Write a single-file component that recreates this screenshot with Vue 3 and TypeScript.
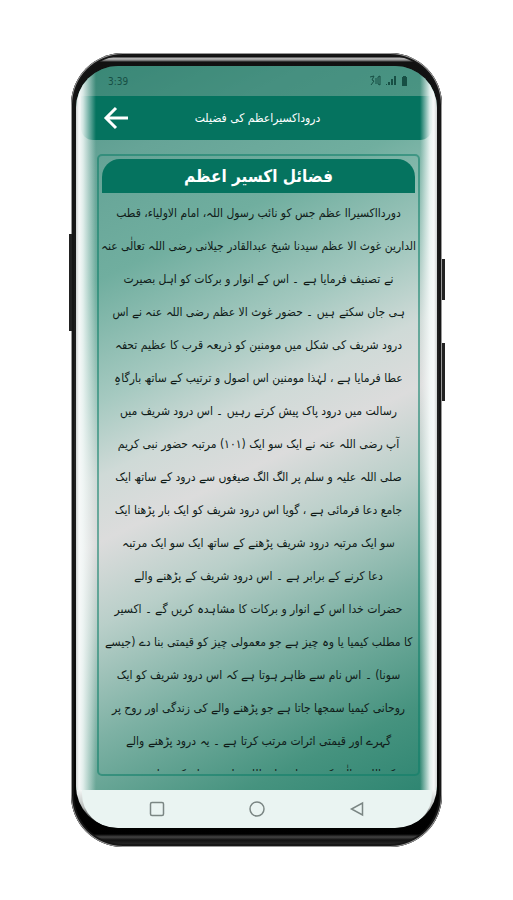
<script setup lang="ts">
const clock: string = '3:39'
const pageTitle: string = 'دروداکسیراعظم کی فضیلت'
const cardTitle: string = 'فضائل اکسیر اعظم'

const lines: string[] = [
  'دوردااکسیراا عظم جس کو نائب رسول اللہ، امام الاولیاء، قطب',
  'الدارین غوث الا عظم سیدنا شیخ عبدالقادر جیلانی رضی اللہ تعالٰی عنہ',
  'نے تصنیف فرمایا ہے ۔ اس کے انوار و برکات کو اہل بصیرت',
  'ہی جان سکتے ہیں ۔ حضور غوث الا عظم رضی اللہ عنہ نے اس',
  'درود شریف کی شکل میں مومنین کو ذریعہ قرب کا عظیم تحفہ',
  'عطا فرمایا ہے ، لہٰذا مومنین اس اصول و ترتیب کے ساتھ بارگاہِ',
  'رسالت میں درود پاک پیش کرتے رہیں ۔ اس درود شریف میں',
  'آپ رضی اللہ عنہ نے ایک سو ایک (۱۰۱) مرتبہ حضور نبی کریم',
  'صلی اللہ علیہ و سلم پر الگ الگ صیغوں سے درود کے ساتھ ایک',
  'جامع دعا فرمائی ہے ، گویا اس درود شریف کو ایک بار پڑھنا ایک',
  'سو ایک مرتبہ درود شریف پڑھنے کے ساتھ ایک سو ایک مرتبہ',
  'دعا کرنے کے برابر ہے ۔ اس درود شریف کے پڑھنے والے',
  'حضرات خدا اس کے انوار و برکات کا مشاہدہ کریں گے ۔ اکسیر',
  'کا مطلب کیمیا یا وہ چیز ہے جو معمولی چیز کو قیمتی بنا دے (جیسے',
  'سونا) ۔ اس نام سے ظاہر ہوتا ہے کہ اس درود شریف کو ایک',
  'روحانی کیمیا سمجھا جاتا ہے جو پڑھنے والے کی زندگی اور روح پر',
  'گہرے اور قیمتی اثرات مرتب کرتا ہے ۔ یہ درود پڑھنے والے',
  'کو اللہ تعالٰی کے رسول صلی اللہ علیہ و سلم کی زیارت سے',
]
</script>

<template>
  <main class="stage">
    <div class="phone">
      <span class="key key-left"></span>
      <span class="key key-power"></span>
      <span class="key key-volume"></span>
      <div class="screen">
        <div class="status">
          <span>{{ clock }}</span>
          <svg class="signals" viewBox="0 0 40 12" aria-hidden="true">
            <path d="M1 2l4-1-2 4 2 1-3 4M7 3v6M9 2l2-1v9l-2-1z" fill="none" stroke="currentColor" />
            <path d="M17 10V9h1v1zM19 10V7h2v3zM22 10V4h2v6zM25 10V1h2v9z" fill="currentColor" />
            <path d="M33 2h1V1h3v1h1v9h-5z" fill="currentColor" />
          </svg>
        </div>
        <header class="bar">
          <button class="back" type="button" aria-label="Back">
            <svg viewBox="0 0 26 24" aria-hidden="true">
              <path d="M13 2L3 12L13 22M3 12H25" fill="none" stroke="currentColor" stroke-width="3" />
            </svg>
          </button>
          <h1 dir="rtl" lang="ur">{{ pageTitle }}</h1>
        </header>
        <article class="card" dir="rtl" lang="ur">
          <h2>{{ cardTitle }}</h2>
          <div class="text">
            <p v-for="(line, i) in lines" :key="i">{{ line }}</p>
          </div>
        </article>
        <nav class="keys">
          <button type="button" aria-label="Recent apps">
            <svg viewBox="0 0 32 32" aria-hidden="true"><rect x="3" y="3" width="26" height="26" rx="3" /></svg>
          </button>
          <button type="button" aria-label="Home">
            <svg viewBox="0 0 32 32" aria-hidden="true"><circle cx="16" cy="16" r="14" /></svg>
          </button>
          <button type="button" aria-label="Previous">
            <svg viewBox="0 0 32 32" aria-hidden="true"><path d="M27 4v24L5 16z" /></svg>
          </button>
        </nav>
      </div>
    </div>
  </main>
</template>

<style>
body {
  background: #fff;
}
</style>

<style scoped>
.stage {
  box-sizing: border-box;
  min-height: 100vh;
  padding: 53px 71px;
  font-family: "DejaVu Sans Condensed", "DejaVu Sans", sans-serif;
}
.phone {
  position: relative;
  box-sizing: border-box;
  height: calc(100vh - 106px);
  padding: 13px 5px 19px;
  border-radius: 52px;
  background: linear-gradient(#111 0, #111 4px, #bbb 5px, #999 7px, #111 9px, #222 50%, #000 calc(100% - 13px), #444 calc(100% - 10px), #111 calc(100% - 7px), #333 100%);
  box-shadow: inset 0 0 0 1px #999, inset 0 0 0 3px #161616;
}
.key {
  position: absolute;
  width: 3px;
  background: #222;
}
.key-left {
  left: -2px;
  top: 181px;
  height: 97px;
}
.key-power {
  right: -3px;
  top: 206px;
  height: 41px;
}
.key-volume {
  right: -3px;
  top: 290px;
  height: 58px;
}
.screen {
  position: relative;
  display: flex;
  flex-direction: column;
  height: 100%;
  overflow: hidden;
  border-radius: 42px;
  background:
    linear-gradient(#f4f7f6 0, #b9bdbc 45%, #111 85%) bottom / 100% 38px no-repeat,
    linear-gradient(154deg, #4f9485 0%, #66a497 12%, #70ae9f 24%, #a5c9c0 37%, #cfdad7 45%, #dcdcdc 52%, #b9cfc9 61%, #7db1a4 73%, #46937f 86%, #237f6b 100%);
}
.screen::after {
  content: "";
  position: absolute;
  inset: 0 0 38px;
  pointer-events: none;
  background:
    linear-gradient(90deg, #cfd3d2 0, #f7f9f9 3px, rgba(245, 250, 249, 0.85) 7px, rgba(240, 250, 247, 0) 20px),
    linear-gradient(270deg, #cfd3d2 0, #f7f9f9 3px, rgba(245, 250, 249, 0.9) 7px, rgba(240, 250, 247, 0) 17px);
}
.status {
  display: flex;
  flex: none;
  align-items: center;
  justify-content: space-between;
  height: 30px;
  padding: 0 28px 0 32px;
  background: rgba(30, 120, 100, 0.45);
  color: #174f44;
  font-size: 10px;
}
.signals {
  width: 40px;
  height: 12px;
}
.bar {
  display: grid;
  flex: none;
  grid-template-columns: 50px 1fr 50px;
  align-items: center;
  height: 44px;
  margin: 0 5px;
  padding: 0 16px 0 18px;
  border-radius: 0 0 12px 12px;
  background: #05735f;
  color: #fff;
}
.back {
  display: flex;
  padding: 0 4px;
  border: 0;
  background: none;
  color: inherit;
}
.back svg {
  width: 26px;
  height: 24px;
}
h1 {
  margin: 0;
  font-size: 12px;
  font-weight: 400;
  text-align: center;
  white-space: nowrap;
}
.card {
  display: flex;
  flex: 1;
  flex-direction: column;
  min-height: 0;
  margin: 14px 17px 14px 21px;
  padding: 3px;
  border: 2px solid rgba(12, 125, 103, 0.55);
  border-radius: 5px;
}
h2 {
  flex: none;
  margin: 0;
  border-radius: 18px 18px 0 0;
  background: #05735f;
  color: #fff;
  font-size: 17px;
  line-height: 34px;
  text-align: center;
}
.text {
  display: flex;
  flex: 1;
  flex-direction: column;
  align-items: center;
  min-height: 0;
  padding-top: 4px;
  overflow-x: visible;
  overflow-y: clip;
}
p {
  flex: none;
  margin: 0;
  color: #101c19;
  font-size: 12px;
  line-height: 33px;
  white-space: nowrap;
}
.keys {
  display: flex;
  flex: none;
  align-items: center;
  justify-content: space-between;
  height: 38px;
  margin: 0 5px 0 6px;
  padding: 0 67px;
  border-radius: 0 0 34px 34px;
  background: #eaf4f2;
}
.keys button {
  display: flex;
  padding: 0;
  border: 0;
  background: none;
}
.keys svg {
  width: 16px;
  height: 16px;
  fill: none;
  stroke: #7b8684;
  stroke-width: 3;
}
</style>
